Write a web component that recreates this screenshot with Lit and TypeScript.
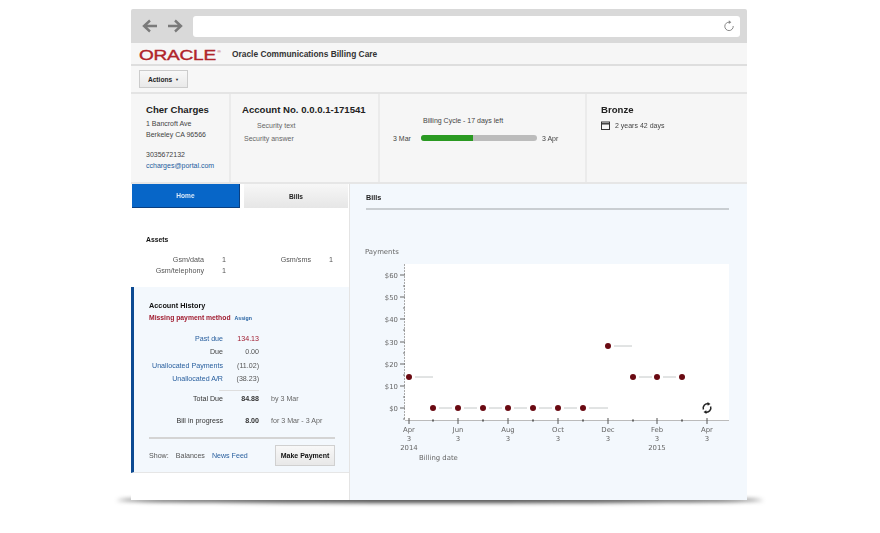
import { LitElement, html, css, svg } from "lit";
import { customElement } from "lit/decorators.js";

const yTicks = [["$60", 275], ["$50", 297], ["$40", 319], ["$30", 342], ["$20", 364], ["$10", 386], ["$0", 408]] as const;
const xMajor = [
  [409, "Apr", "2014"], [458, "Jun", ""], [508, "Aug", ""], [558, "Oct", ""],
  [608, "Dec", ""], [657, "Feb", "2015"], [707, "Apr", ""],
] as const;
const xMinor = [433, 483, 533, 583, 633, 682];
const dots = [[409, 377, 433], [433, 408, 452], [458, 408, 477], [483, 408, 502], [508, 408, 527], [533, 408, 552], [558, 408, 577], [583, 408, 608], [608, 346, 632], [633, 377, 652], [657, 377, 676], [682, 377, 0]] as const;

@customElement("app-root")
export class AppRoot extends LitElement {
  static styles = css`
    :host { display: block; width: 880px; height: 533px; background: #fff; box-sizing: border-box; padding: 9px 133px 33px 131px; font-family: "Liberation Sans", Arial, sans-serif; color: #333; overflow: hidden; }
    .window { position: relative; height: 491px; display: flex; flex-direction: column; background: #fff; border-radius: 2px; filter: blur(.45px); }
    .window::after { content: ""; position: absolute; z-index: -1; left: -14px; right: -16px; bottom: -3px; height: 6px; border-radius: 50%; background: #4a4a4a; filter: blur(2px); }
    .chrome { height: 34px; background: #d9d9d9; display: flex; align-items: center; padding: 0 7px 0 11px; box-sizing: border-box; gap: 9px; border-radius: 2px 2px 0 0; }
    .navs { display: flex; gap: 9px; width: 42px; }
    .address { flex: 1; height: 21px; background: #fff; border-radius: 3px; display: flex; align-items: center; justify-content: flex-end; padding-right: 5px; }
    .brand { height: 21px; background: #f6f6f6; display: flex; align-items: center; padding-left: 8px; border-bottom: 2px solid #dedede; }
    .logo { width: 80px; height: 21px; line-height: 17px; color: #b0242a; font-size: 15.5px; -webkit-text-stroke: .4px #b0242a; transform: scaleX(1.23); transform-origin: left center; white-space: nowrap; letter-spacing: -.2px; }
    .logo sup { font-size: 4px; -webkit-text-stroke: 0; vertical-align: 7px; margin-left: 1px; }
    .product { margin-left: 13px; font-size: 8.4px; font-weight: 700; color: #333; }
    .toolbar { height: 26px; background: #f7f7f7; display: flex; align-items: center; padding-left: 8px; border-bottom: 2px solid #e4e4e4; }
    .actions { width: 49px; height: 18px; box-sizing: border-box; border: 1px solid #ccc; background: linear-gradient(#f8f8f8, #e9e9e9); font-size: 6.6px; font-weight: 700; display: flex; align-items: center; justify-content: center; gap: 3px; color: #222; }
    .caret { font-size: 4px; font-weight: 400; }
    .summary { height: 88px; display: grid; grid-template-columns: 100px 149px 207px 160px; background: #f6f6f6; border-bottom: 2px solid #e6e6e6; }
    .cell { border-right: 2px solid #ebebeb; box-sizing: border-box; font-size: 7px; color: #444; line-height: 11px; }
    .cell:last-child { border-right: 0; }
    .cell h3 { margin: 0; font-size: 9.6px; font-weight: 700; color: #222; line-height: 12px; }
    .c1 { padding: 10px 0 0 15px; }
    .c1 .a1 { margin-top: 2px; }
    .c1 .phone { margin-top: 9px; }
    .link { color: #1d5c9e; }
    .c2 { padding: 10px 0 0 11px; }
    .c2 .q { padding-left: 15px; margin-top: 4px; color: #666; }
    .c2 .r { padding-left: 2px; margin-top: 2px; color: #666; }
    .c3 { display: flex; flex-direction: column; padding-top: 21px; }
    .cycle { padding-left: 43px; height: 11px; }
    .progress { display: flex; align-items: center; margin-top: 8px; padding-left: 13px; height: 8px; }
    .p-start { width: 28px; }
    .track { width: 116px; height: 6px; border-radius: 3px; background: #bcbcbc; overflow: hidden; }
    .fill { width: 52px; height: 6px; background: #2a9a22; }
    .p-end { margin-left: 5px; }
    .c4 { padding: 10px 0 0 14px; }
    .since { display: flex; align-items: center; gap: 5px; margin-top: 4px; }
    .main { flex: 1; display: grid; grid-template-columns: 219px minmax(0, 1fr); min-height: 0; }
    .left { background: #fff; border-right: 1px solid #e4e4e4; display: flex; flex-direction: column; }
    .tabs { display: flex; gap: 4px; padding-left: 1px; height: 24px; margin-right: 1px; }
    .tab { display: flex; align-items: center; justify-content: center; font-size: 6.6px; font-weight: 700; }
    .tab.on { width: 108px; background: #0766c8; color: #dbe9f8; border-right: 1px solid #0a3f80; border-bottom: 1px solid #0a3f80; box-sizing: border-box; }
    .tab.off { width: 104px; background: linear-gradient(#f7f7f7, #e6e6e6); color: #222; }
    .assets { height: 79px; padding: 28px 0 0 15px; box-sizing: border-box; font-size: 7.2px; color: #555; }
    .assets h4 { margin: 0 0 12px; font-size: 6.8px; font-weight: 700; color: #111; line-height: 8px; }
    .agrid { display: grid; grid-template-columns: 58px 22px 85px 22px; row-gap: 3px; line-height: 8px; }
    .agrid .n { text-align: right; }
    .agrid .v { text-align: right; }
    .history { height: 186px; box-sizing: border-box; background: #f3f8fd; border-left: 3px solid #0c4a92; padding: 14px 14px 0 15px; border-bottom: 1px solid #e6e6e6; font-size: 7.1px; color: #444; }
    .history h4 { margin: 0; font-size: 7.3px; font-weight: 700; color: #111; line-height: 10px; }
    .warn { display: flex; align-items: baseline; gap: 4px; color: #a01c30; font-size: 6.8px; font-weight: 700; line-height: 11px; margin-top: 1px; }
    .warn a { color: #1d5c9e; font-size: 5.2px; }
    .ledger { display: grid; grid-template-columns: 74px 36px auto; margin-top: 9px; line-height: 13.4px; }
    .ledger .l { text-align: right; grid-column: 1; }
    .ledger .l.link { color: #2a609f; }
    .ledger .val { text-align: right; color: #555; }
    .ledger .val.red { color: #a01c30; }
    .ledger .l.b { color: #333; }
    .ledger .val.b { font-weight: 700; color: #333; }
    .ledger .note { padding-left: 12px; color: #666; }
    .sep { grid-column: 2; height: 1px; background: #dedede; margin: 3px 0 2px -4px; width: 40px; }
    .gap { grid-column: 1 / 4; height: 9px; }
    .hr { height: 2px; background: #d4d4d4; margin-top: 9px; }
    .foot { display: flex; align-items: center; height: 29px; padding-top: 2px; color: #555; }
    .foot .bal { margin-left: 7px; }
    .foot .feed { margin-left: 7px; color: #2a609f; }
    .pay { margin-left: auto; width: 60px; height: 21px; box-sizing: border-box; border: 1px solid #d0d0d0; background: linear-gradient(#f8f8f8, #e8e8e8); color: #111; font-weight: 700; font-size: 7px; display: flex; align-items: center; justify-content: center; }
    .right { background: #f3f8fd; display: flex; flex-direction: column; overflow: hidden; }
    .right h4 { margin: 0; padding: 9px 0 0 16px; font-size: 7.2px; font-weight: 700; color: #222; line-height: 9px; }
    .rule { height: 2px; background: #c9ced2; margin: 6px 18px 0 16px; }
    .chart { display: block; }
    .chart text { font-family: "DejaVu Sans", sans-serif; font-size: 6.9px; fill: #666; }
    .chart .c { text-anchor: middle; }
    .chart .e { text-anchor: end; }
  `;

  private renderChart() {
    // viewBox mirrors page coordinates: the chart is a free drawing canvas
    return html`<svg class="chart" width="397" height="290" viewBox="350 210 397 290" xmlns="http://www.w3.org/2000/svg">
      <text x="365" y="254">Payments</text>
      <rect x="405" y="264" width="324" height="156" fill="#fff"/>
      <line x1="404.5" y1="264" x2="404.5" y2="420" stroke="#aaa" stroke-width="1" stroke-dasharray="2 1"/>
      ${yTicks.map(([t, y]) => svg`<text class="e" x="398" y=${y + 2.5}>${t}</text><line x1="400" x2="405" y1=${y} y2=${y} stroke="#666"/><line x1="403" x2="405" y1=${y + 11} y2=${y + 11} stroke="#777"/>`)}
      <line x1="405" x2="729" y1="420.5" y2="420.5" stroke="#bbb" stroke-width="1.2"/>
      ${xMajor.map(([x, m, yr]) => svg`<line x1=${x} x2=${x} y1="418" y2="424" stroke="#555"/>
        <text class="c" x=${x} y="432">${m}</text><text class="c" x=${x} y="441">3</text>
        ${yr ? svg`<text class="c" x=${x} y="450">${yr}</text>` : ""}`)}
      ${xMinor.map((x) => svg`<rect x=${x - 1} y="419.5" width="2" height="2" fill="#666"/>`)}
      <text x="419" y="460">Billing date</text>
      ${dots.map(([x, y, end]) => svg`${end ? svg`<line x1=${x + 6} x2=${end} y1=${y} y2=${y} stroke="#c4c8c8" stroke-width="1"/>` : ""}<circle cx=${x} cy=${y} r="3" fill="#6a0a12"/>`)}
      <g fill="none" stroke="#222" stroke-width="1.5">
        <path d="M703.4 409.5a4.2 4.2 0 0 1 5-5.5"/><path d="M710.6 406.5a4.2 4.2 0 0 1-5 5.5"/>
      </g>
      <path d="M707.5 402l3 2.1-2.8 1.7zM706.5 414l-3-2.1 2.8-1.7z" fill="#222"/>
    </svg>`;
  }

  render() {
    return html`<div class="window">
      <div class="chrome">
        <div class="navs">
          <svg width="16" height="14" viewBox="0 0 16 14" fill="none" stroke="#7a7a7a" stroke-width="2.4"><path d="M15 7H2M8 1.5 2 7l6 5.5"/></svg>
          <svg width="16" height="14" viewBox="0 0 16 14" fill="none" stroke="#7a7a7a" stroke-width="2.4"><path d="M1 7h13M8 1.5 14 7l-6 5.5"/></svg>
        </div>
        <div class="address">
          <svg width="12" height="12" viewBox="0 0 12 12" fill="none" stroke="#888" stroke-width="1"><path d="M6.5 2.2A4.2 4.2 0 1 0 10.2 6"/><path d="M5.8.3 8.3 2.2 5.8 4" fill="#888" stroke="none"/></svg>
        </div>
      </div>
      <div class="brand">
        <div class="logo">ORACLE<sup>®</sup></div>
        <div class="product">Oracle Communications Billing Care</div>
      </div>
      <div class="toolbar"><div class="actions">Actions <span class="caret">▼</span></div></div>
      <div class="summary">
        <div class="cell c1">
          <h3>Cher Charges</h3>
          <div class="a1">1 Bancroft Ave</div>
          <div>Berkeley CA 96566</div>
          <div class="phone">3035672132</div>
          <div class="link">ccharges@portal.com</div>
        </div>
        <div class="cell c2">
          <h3>Account No. 0.0.0.1-171541</h3>
          <div class="q">Security text</div>
          <div class="r">Security answer</div>
        </div>
        <div class="cell c3">
          <div class="cycle">Billing Cycle - 17 days left</div>
          <div class="progress">
            <span class="p-start">3 Mar</span>
            <div class="track"><div class="fill"></div></div>
            <span class="p-end">3 Apr</span>
          </div>
        </div>
        <div class="cell c4">
          <h3>Bronze</h3>
          <div class="since">
            <svg width="9" height="9" viewBox="0 0 9 9" fill="none" stroke="#333"><rect x=".5" y="1" width="8" height="7.5"/><path d="M.5 2.8h8" stroke-width="1.4"/></svg>
            <span>2 years 42 days</span>
          </div>
        </div>
      </div>
      <div class="main">
        <div class="left">
          <div class="tabs"><div class="tab on">Home</div><div class="tab off">Bills</div></div>
          <div class="assets">
            <h4>Assets</h4>
            <div class="agrid">
              <span class="n">Gsm/data</span><span class="v">1</span><span class="n">Gsm/sms</span><span class="v">1</span>
              <span class="n">Gsm/telephony</span><span class="v">1</span>
            </div>
          </div>
          <div class="history">
            <h4>Account History</h4>
            <div class="warn">Missing payment method <a>Assign</a></div>
            <div class="ledger">
              <span class="l link">Past due</span><span class="val red">134.13</span><span></span>
              <span class="l">Due</span><span class="val">0.00</span><span></span>
              <span class="l link">Unallocated Payments</span><span class="val">(11.02)</span><span></span>
              <span class="l link">Unallocated A/R</span><span class="val">(38.23)</span><span></span>
              <div class="sep"></div><span></span>
              <span class="l b">Total Due</span><span class="val b">84.88</span><span class="note">by 3 Mar</span>
              <div class="gap"></div>
              <span class="l b">Bill in progress</span><span class="val b">8.00</span><span class="note">for 3 Mar - 3 Apr</span>
            </div>
            <div class="hr"></div>
            <div class="foot">
              <span>Show:</span><span class="bal">Balances</span><span class="feed">News Feed</span>
              <div class="pay">Make Payment</div>
            </div>
          </div>
        </div>
        <div class="right">
          <h4>Bills</h4>
          <div class="rule"></div>
          ${this.renderChart()}
        </div>
      </div>
    </div>`;
  }
}
